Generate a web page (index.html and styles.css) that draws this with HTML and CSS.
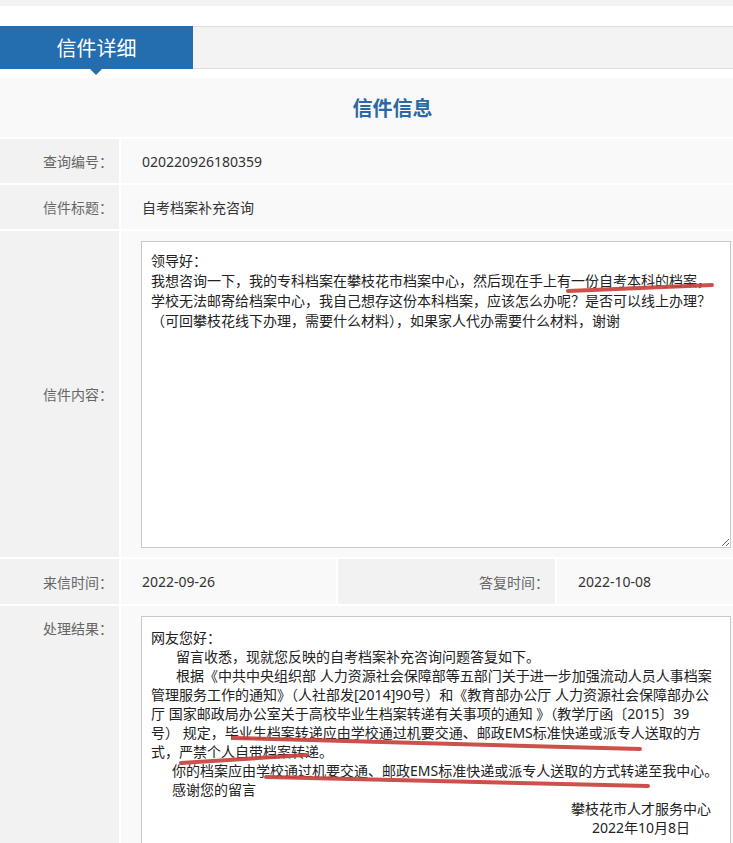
FILE: index.html
```html
<!DOCTYPE html>
<html lang="zh-CN">
<head>
<meta charset="utf-8">
<title>信件详细</title>
<link rel="stylesheet" href="styles.css">
</head>
<body>
<div class="topstrip"></div>
<div class="spacer"></div>
<div class="tabbar">
  <div class="tab">信件详细</div>
</div>
<div class="panel">
  <div class="title-row">信件信息</div>
  <div class="row">
    <div class="label">查询编号：</div>
    <div class="value">020220926180359</div>
  </div>
  <div class="row">
    <div class="label">信件标题：</div>
    <div class="value">自考档案补充咨询</div>
  </div>
  <div class="row row-content">
    <div class="label">信件内容：</div>
    <div class="value box-cell">
      <div class="box box-letter">
        <div>领导好：</div>
        <div>我想咨询一下，我的专科档案在攀枝花市档案中心，然后现在手上有一份自考本科的档案，</div>
        <div>学校无法邮寄给档案中心，我自己想存这份本科档案，应该怎么办呢？是否可以线上办理？</div>
        <div>（可回攀枝花线下办理，需要什么材料），如果家人代办需要什么材料，谢谢</div>
      </div>
    </div>
  </div>
  <div class="row row-dates">
    <div class="label">来信时间：</div>
    <div class="value">2022-09-26</div>
    <div class="label">答复时间：</div>
    <div class="value">2022-10-08</div>
  </div>
  <div class="row row-result">
    <div class="label label-top">处理结果：</div>
    <div class="value box-cell">
      <div class="box box-reply">
        <div>网友您好：</div>
        <div class="indent">留言收悉，现就您反映的自考档案补充咨询问题答复如下。</div>
        <div class="indent">根据《中共中央组织部 人力资源社会保障部等五部门关于进一步加强流动人员人事档案</div>
        <div>管理服务工作的通知》（人社部发[2014]90号）和《教育部办公厅 人力资源社会保障部办公</div>
        <div>厅 国家邮政局办公室关于高校毕业生档案转递有关事项的通知 》（教学厅函〔2015〕39</div>
        <div>号） 规定，毕业生档案转递应由学校通过机要交通、邮政EMS标准快递或派专人送取的方</div>
        <div>式，严禁个人自带档案转递。</div>
        <div class="indent-s">你的档案应由学校通过机要交通、邮政EMS标准快递或派专人送取的方式转递至我中心。</div>
        <div class="indent-s">感谢您的留言</div>
        <div class="sign">
          <div>攀枝花市人才服务中心</div>
          <div>2022年10月8日</div>
        </div>
      </div>
    </div>
  </div>
</div>
<svg class="marks" width="733" height="843" viewBox="0 0 733 843" aria-hidden="true">
  <g stroke="#c8423c" stroke-width="4" stroke-linecap="round" fill="none" opacity="0.92">
    <path d="M568 291 L712 285"/>
    <path d="M233 738 L640 749"/>
    <path d="M181 763 L306 755"/>
    <path d="M266 777 L648 786"/>
  </g>
</svg>
</body>
</html>
```
FILE: styles.css
```css
* { box-sizing: border-box; }

body {
  margin: 0;
  background: #fff;
  font-family: "Noto Sans", "Noto Sans CJK SC", sans-serif;
  font-size: 14px;
  color: #333;
  position: relative;
  width: 733px;
  height: 843px;
  overflow: hidden;
}

.topstrip {
  height: 6px;
  background: #f3f3f3;
}

.spacer {
  height: 20px;
}

.tabbar {
  height: 43px;
  background: #f3f3f3;
  border-top: 1px solid #dedede;
  border-bottom: 1px solid #dedede;
  display: flex;
}

.tab {
  width: 193px;
  margin: -1px 0;
  background: #246daf;
  color: #fff;
  font-size: 20px;
  display: flex;
  align-items: center;
  justify-content: center;
  position: relative;
}

.tab::after {
  content: "";
  position: absolute;
  left: 90px;
  bottom: -6px;
  border-left: 6px solid transparent;
  border-right: 6px solid transparent;
  border-top: 6px solid #246daf;
}

.panel {
  margin-top: 9px;
  display: flex;
  flex-direction: column;
  gap: 2px;
  background: #fff;
}

.title-row {
  height: 59px;
  background: #f9f9f9;
  display: flex;
  align-items: center;
  justify-content: center;
  padding-left: 52px;
  font-size: 20px;
  font-weight: bold;
  color: #2b69a6;
}

.row {
  display: grid;
  grid-template-columns: 119px 1fr;
  gap: 2px;
  min-height: 44px;
}

.row-dates {
  grid-template-columns: 119px 215px 217px 1fr;
  min-height: 45px;
}

.label {
  background: #f2f2f2;
  color: #666;
  display: flex;
  align-items: center;
  justify-content: flex-end;
  padding-right: 6px;
}

.label-top {
  align-items: flex-start;
  padding-top: 12px;
}

.value {
  background: #f9f9f9;
  display: flex;
  align-items: center;
  padding-left: 21px;
  color: #333;
}

.box-cell {
  display: block;
  padding: 10px 2px 9px 20px;
}

.box {
  background: #fff;
  border: 1px solid #c8c8c8;
  color: #222;
  font-size: 14px;
  padding: 9px 9px;
  white-space: nowrap;
  resize: both;
  overflow: hidden;
}

.box-letter {
  height: 307px;
  line-height: 20px;
}

.box-reply {
  height: 260px;
  line-height: 19px;
  padding-top: 11px;
}

.indent { padding-left: 25px; }
.indent-s { padding-left: 21px; }

.sign {
  width: max-content;
  margin-left: auto;
  margin-right: 10px;
  text-align: center;
}

.marks {
  position: absolute;
  left: 0;
  top: 0;
  pointer-events: none;
}
```
